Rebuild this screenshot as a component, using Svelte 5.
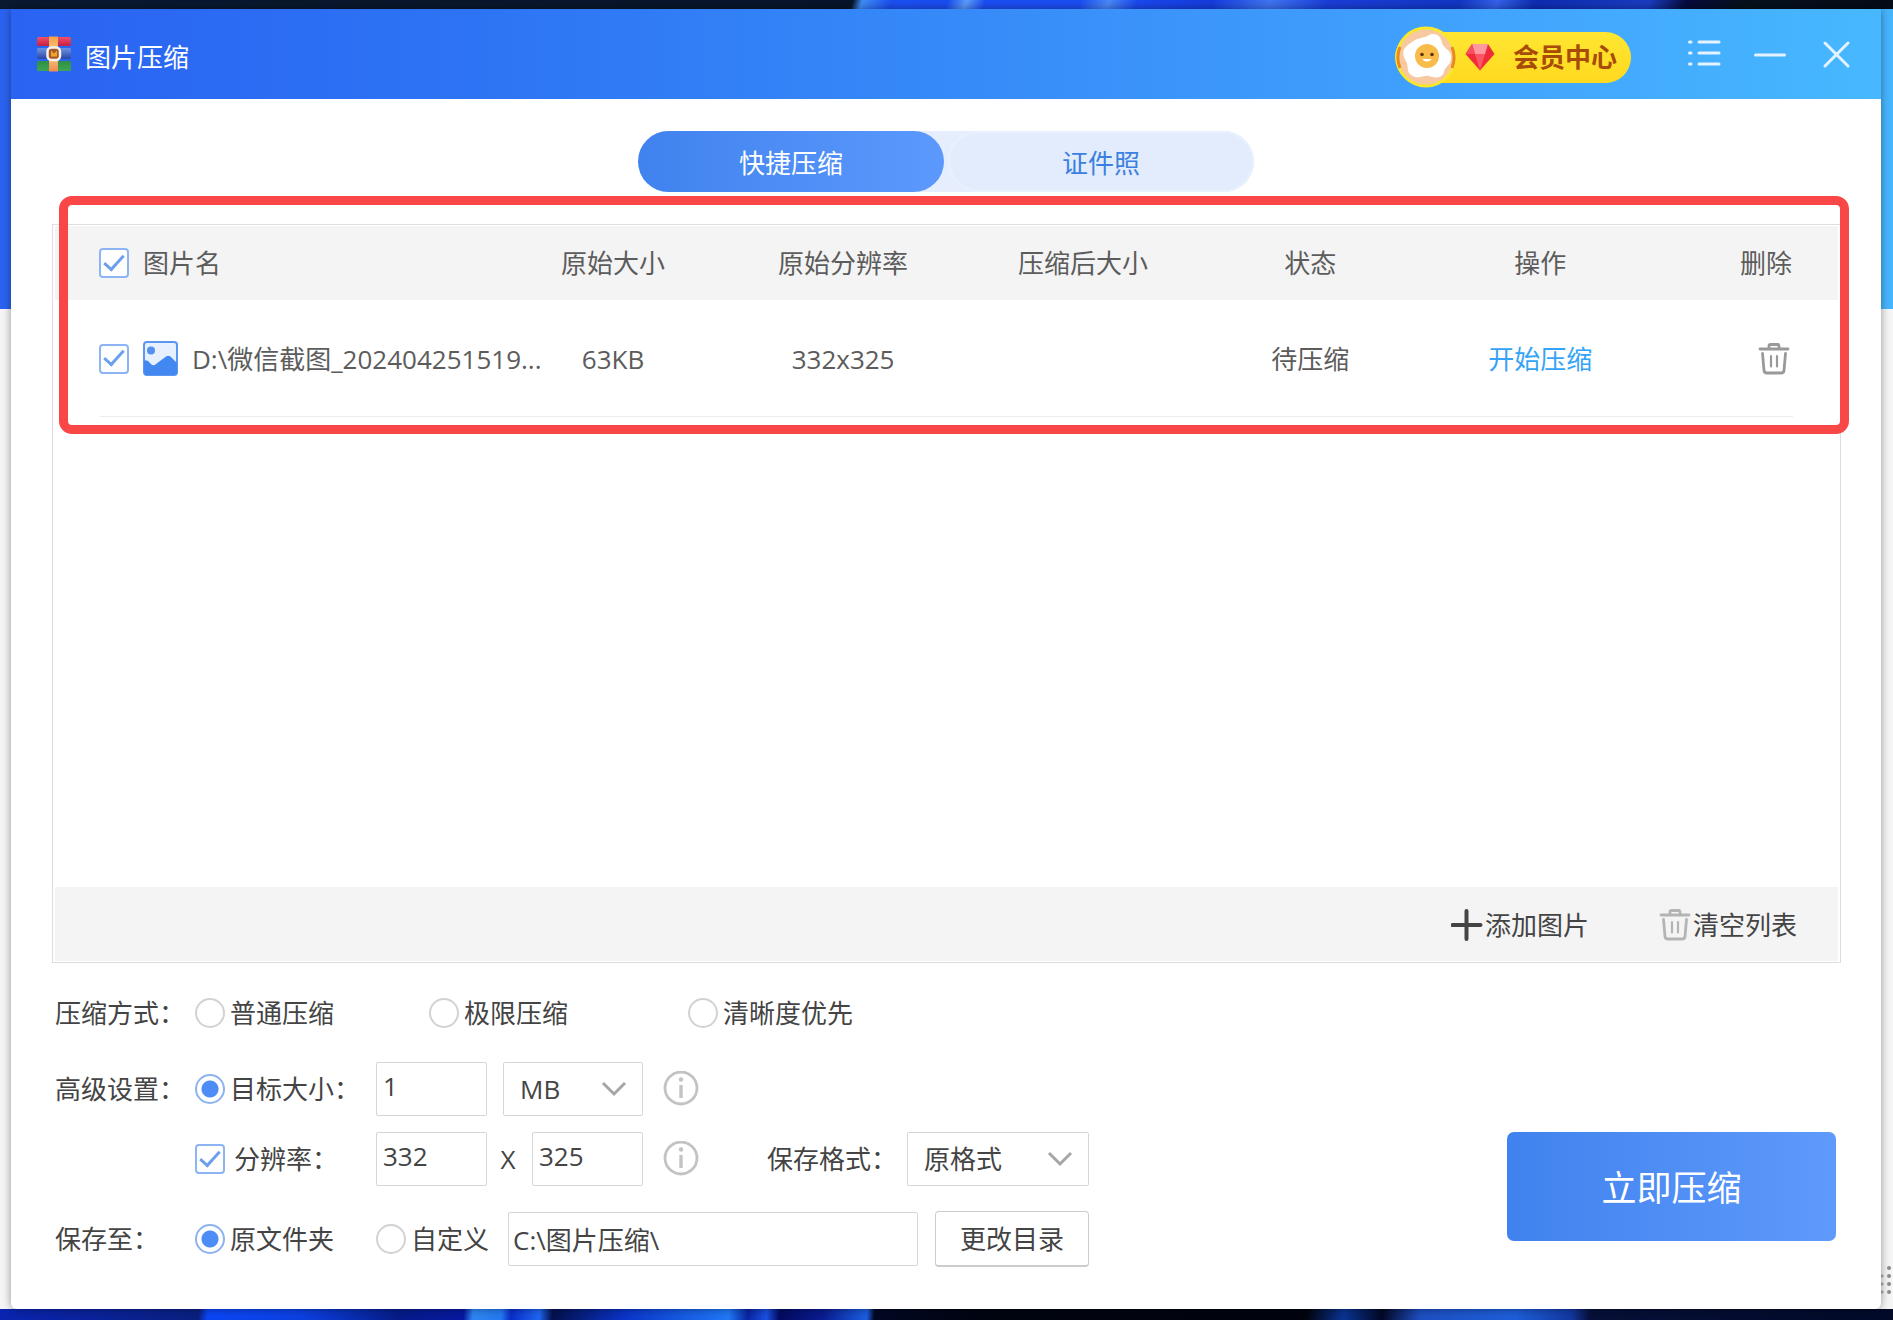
<script>
    let files = $state([
        { name: 'D:\\微信截图_202404251519...', size: '63KB', resolution: '332x325', after: '', status: '待压缩', checked: true }
    ]);
    const columns = ['原始大小', '原始分辨率', '压缩后大小', '状态', '操作', '删除'];
    const modes = ['普通压缩', '极限压缩', '清晰度优先'];

    let tab = $state('quick');
    let mode = $state('');
    let byTarget = $state('target');
    let targetSize = $state('1');
    let unit = $state('MB');
    let keepResolution = $state(true);
    let width = $state('332');
    let height = $state('325');
    let format = $state('原格式');
    let saveTo = $state('source');
    let folder = $state('C:\\图片压缩\\');

    let allChecked = $derived(files.length > 0 && files.every((f) => f.checked));

    function toggleAll(e) {
        const checked = e.target.checked;
        files.forEach((f) => (f.checked = checked));
    }

    function removeFile(index) {
        files.splice(index, 1);
    }
</script>

{#snippet trash(color)}
    <svg class="trash" viewBox="0 0 32 32" width="32" height="32" fill="none" stroke={color} stroke-width="2.8" stroke-linecap="round" stroke-linejoin="round" aria-hidden="true">
        <path d="M2 6H30" />
        <path d="M11 5.500V3Q11 1.500 12.500 1.500H19.500Q21 1.500 21 3V5.500" />
        <path d="M4.500 10.500L6 27.500Q6.300 30 9 30H23Q25.700 30 26 27.500L27.500 10.500" />
        <path d="M13 13V23.500M19 13V23.500" stroke-width="2.2" />
    </svg>
{/snippet}

{#snippet info()}
    <button class="info" aria-label="说明">
        <svg viewBox="0 0 36 36" width="36" height="36" fill="none" stroke="#c3c3c3" aria-hidden="true">
            <circle cx="18" cy="17" r="16" stroke-width="2.800" />
            <path d="M18 14V27" stroke-width="3.400" />
            <circle cx="18" cy="8.500" r="2.200" fill="#c3c3c3" stroke="none" />
        </svg>
    </button>
{/snippet}

<div class="desktop">
    <div class="wallpaper top"></div>
    <div class="behind">
        <div class="window">
            <header>
                <svg class="logo" viewBox="0 0 36 36" width="36" height="36" aria-hidden="true">
                    <defs>
                        <linearGradient id="red" x1="0" y1="0" x2="0" y2="1"><stop offset="0" stop-color="#f0506c" /><stop offset="1" stop-color="#c41f45" /></linearGradient>
                        <linearGradient id="blue" x1="0" y1="0" x2="0" y2="1"><stop offset="0" stop-color="#6d94e0" /><stop offset="1" stop-color="#2746a8" /></linearGradient>
                        <linearGradient id="green" x1="0" y1="0" x2="0" y2="1"><stop offset="0" stop-color="#2f8f45" /><stop offset="1" stop-color="#3fa552" /></linearGradient>
                        <linearGradient id="strap" x1="0" y1="0" x2="0" y2="1"><stop offset="0" stop-color="#f2a04a" /><stop offset="0.500" stop-color="#fbd08a" /><stop offset="1" stop-color="#f08a50" /></linearGradient>
                    </defs>
                    <rect x="1" y="1" width="34" height="9" rx="1.500" fill="url(#red)" />
                    <rect x="1" y="12" width="34" height="11" rx="1.500" fill="url(#blue)" />
                    <rect x="1" y="25" width="34" height="10" rx="1.500" fill="url(#green)" />
                    <rect x="13" y="0.500" width="9" height="35" fill="url(#strap)" />
                    <rect x="11.500" y="11.500" width="12.500" height="12.500" rx="4" fill="#a55a2a" stroke="#f6f1ea" stroke-width="2.500" />
                    <path d="M15 14.500V20.500H21V14.500L18 17.500Z" fill="#f0a52a" />
                </svg>
                <h1>图片压缩</h1>
                <button class="vip">
                    <svg class="egg" viewBox="0 0 62 64" width="62" height="64" aria-hidden="true">
                        <circle cx="31" cy="32" r="29" fill="#f8c9a0" stroke="#fbe62e" stroke-width="3" />
                        <path d="M5 43A28 28 0 0 1 5 22M57 22A28 28 0 0 1 57 43" fill="none" stroke="#e88a1c" stroke-width="3" />
                        <path d="M20 15C26 12 30 13 34 10C42 7 46 12 47 18C48 23 58 26 56 34C55 41 50 41 49 47C47 54 39 53 34 51C28 50 23 55 16 50C11 46 14 41 11 36C8 31 7 26 10 23C13 19 16 18 20 15Z" fill="#fff" />
                        <circle cx="32" cy="31" r="12" fill="#f9bb4a" />
                        <circle cx="27" cy="29.500" r="1.800" fill="#5b3412" />
                        <circle cx="37" cy="29.500" r="1.800" fill="#5b3412" />
                        <path d="M27 34Q32 39.500 37 34Z" fill="#fff" />
                    </svg>
                    <svg viewBox="0 0 30 28" width="30" height="28" aria-hidden="true">
                        <path d="M7 1H23L29.500 11L15 27.500L0.500 11Z" fill="#f02c3c" />
                        <path d="M7 1H23L20 11H10Z" fill="#ff98a0" />
                        <path d="M7 1L10 11H0.500Z" fill="#f8505c" />
                        <path d="M10 11H20L15 27.500Z" fill="#fb5662" />
                    </svg>
                    <span>会员中心</span>
                </button>
                <nav aria-label="窗口">
                    <button aria-label="菜单">
                        <svg viewBox="0 0 34 34" width="34" height="34" stroke="#e4f3ff" stroke-width="3" stroke-linecap="round" aria-hidden="true">
                            <path d="M2.500 6H4M12 6H32M2.500 17H4M12 17H32M2.500 28H4M12 28H32" />
                        </svg>
                    </button>
                    <button aria-label="最小化">
                        <svg viewBox="0 0 34 34" width="34" height="34" stroke="#e4f3ff" stroke-width="3" stroke-linecap="round" aria-hidden="true">
                            <path d="M2.500 19H31.500" />
                        </svg>
                    </button>
                    <button aria-label="关闭">
                        <svg viewBox="0 0 34 34" width="34" height="34" stroke="#e4f3ff" stroke-width="3" stroke-linecap="round" aria-hidden="true">
                            <path d="M6 7L29 30M29 7L6 30" />
                        </svg>
                    </button>
                </nav>
            </header>

            <div class="tabs">
                <button class:active={tab === 'quick'} onclick={() => (tab = 'quick')}>快捷压缩</button>
                <button class:active={tab === 'photo'} onclick={() => (tab = 'photo')}>证件照</button>
            </div>

            <section class="panel">
                <div class="highlight"></div>
                <table>
                    <colgroup>
                        <col class="c-name" /><col class="c-size" /><col class="c-res" /><col class="c-after" /><col class="c-status" /><col class="c-action" /><col class="c-delete" />
                    </colgroup>
                    <thead>
                        <tr>
                            <th>
                                <label class="name">
                                    <input type="checkbox" checked={allChecked} onchange={toggleAll} />
                                    图片名
                                </label>
                            </th>
                            {#each columns as column}
                                <th>{column}</th>
                            {/each}
                        </tr>
                    </thead>
                    <tbody>
                        {#each files as file, index}
                            <tr>
                                <td>
                                    <label class="name">
                                        <input type="checkbox" bind:checked={file.checked} />
                                        <svg viewBox="0 0 35 35" width="35" height="35" aria-hidden="true">
                                            <rect x="1" y="1" width="33" height="33" rx="3" fill="#e6f0ff" stroke="#5b96f0" stroke-width="2" />
                                            <circle cx="8" cy="9.500" r="4" fill="#5590ee" />
                                            <path d="M1 20Q4 18 7 22Q10 26 13 23L23 15.500Q26 13.500 29 17L34 22V31Q34 34 31 34H4Q1 34 1 31Z" fill="#4388f0" />
                                        </svg>
                                        {file.name}
                                    </label>
                                </td>
                                <td>{file.size}</td>
                                <td>{file.resolution}</td>
                                <td>{file.after}</td>
                                <td>{file.status}</td>
                                <td><button class="link">开始压缩</button></td>
                                <td><button class="icon" aria-label="删除" onclick={() => removeFile(index)}>{@render trash('#999')}</button></td>
                            </tr>
                        {/each}
                    </tbody>
                </table>
                <div class="toolbar">
                    <button>
                        <svg viewBox="0 0 32 32" width="32" height="32" stroke="#444" stroke-width="4" stroke-linecap="round" aria-hidden="true">
                            <path d="M15.500 2V30M1.500 16H29.500" />
                        </svg>
                        添加图片
                    </button>
                    <button onclick={() => (files = [])}>{@render trash('#b4b4b4')}清空列表</button>
                </div>
            </section>

            <div class="settings">
                <form onsubmit={(e) => e.preventDefault()}>
                    <div class="row modes">
                        <span class="label">压缩方式：</span>
                        {#each modes as item}
                            <label><input type="radio" name="mode" value={item} bind:group={mode} />{item}</label>
                        {/each}
                    </div>
                    <div class="row">
                        <span class="label">高级设置：</span>
                        <label class="option"><input type="radio" name="target" value="target" bind:group={byTarget} />目标大小：</label>
                        <input class="number" type="text" aria-label="目标大小" bind:value={targetSize} />
                        <select class="unit" aria-label="单位" bind:value={unit}>
                            <option>MB</option>
                            <option>KB</option>
                        </select>
                        {@render info()}
                    </div>
                    <div class="row">
                        <span class="label"></span>
                        <label class="option check"><input type="checkbox" bind:checked={keepResolution} />分辨率：</label>
                        <input class="number" type="text" aria-label="宽度" bind:value={width} />
                        <span class="times">X</span>
                        <input class="number" type="text" aria-label="高度" bind:value={height} />
                        {@render info()}
                        <label class="format-label" for="format">保存格式：</label>
                        <select class="format" id="format" bind:value={format}>
                            <option>原格式</option>
                            <option>JPG</option>
                            <option>PNG</option>
                        </select>
                    </div>
                    <div class="row save">
                        <span class="label">保存至：</span>
                        <label class="option"><input type="radio" name="save" value="source" bind:group={saveTo} />原文件夹</label>
                        <label class="custom"><input type="radio" name="save" value="custom" bind:group={saveTo} />自定义</label>
                        <input class="path" type="text" aria-label="保存目录" bind:value={folder} />
                        <button class="change">更改目录</button>
                    </div>
                </form>
                <button class="start">立即压缩</button>
            </div>
        </div>
        <svg class="grip" viewBox="0 0 12 30" width="12" height="30" fill="#8a8a8a" aria-hidden="true">
            {#each [3, 11, 19, 27] as y, i}
                <circle cx="8" cy={y} r="2" />
                {#if i > 0}<circle cx="1" cy={y} r="1.500" />{/if}
            {/each}
        </svg>
    </div>
    <div class="wallpaper bottom"></div>
</div>

<style>
    :global(body) {
        margin: 0;
    }

    .desktop {
        display: flex;
        flex-direction: column;
        min-height: 100vh;
        font: 26px/36px "Open Sans", "Noto Sans CJK SC", sans-serif;
        color: #444;
    }

    .wallpaper.top {
        height: 9px;
        background: linear-gradient(110deg, #0a1930 0%, #08142a 45%, #3f8df5 45.5%, #1c50f0 47%, #1a4cf0 50%, #5a9bf8 51%, #1b4df2 52%, #1b4df2 57%, #4a88f5 58.5%, #1a48ec 60%, #163cdc 64%, #3f74f0 67%, #1a3ed8 70%, #1236c4 77%, #3461e8 79%, #0d2cb0 81%, #1a3cc0 87%, #060a3c 89%, #06101c 92%, #040c18 100%);
    }

    .wallpaper.bottom {
        height: 11px;
        background: linear-gradient(95deg, #0a24b0 0%, #0a2080 10.5%, #0b46f5 11%, #0b40e0 16%, #071c88 21%, #0618a0 24.5%, #2d86f0 25%, #2478ee 26.5%, #0a2cc8 27%, #1f66f0 28.5%, #04104c 29.2%, #0a34c8 33%, #1f78f5 38.5%, #0a24a0 39.5%, #1a50e0 40.5%, #030b60 41.2%, #0a1c90 43.5%, #1a5ee0 45.8%, #020824 46.2%, #010510 52%, #01040e 69%, #0a3494 71%, #020824 73%, #1d4ec0 75%, #1d5ed8 80%, #1238a0 83%, #061038 84%, #020a28 100%);
    }

    .behind {
        position: relative;
        display: flex;
        flex: 1;
        padding: 0 12px 0 11px;
        background: linear-gradient(90deg, #2a63f0, #2d76f4 30%, #3f9dfb 72%, #47b5fd) top / 100% 300px no-repeat #f5f5f5;
    }

    .window {
        flex: 1;
        min-width: 0;
        background: #fff;
        border-radius: 0 0 6px 6px;
        box-shadow: 0 0 8px rgba(0, 0, 0, 0.4);
    }

    header {
        display: flex;
        align-items: center;
        height: 90px;
        padding: 6px 28px 0 25px;
        box-sizing: border-box;
        background: linear-gradient(90deg, #2a63f2, #2d74f4 25%, #3f9dfc 72%, #47b8ff);
        color: #fff;
    }

    .logo {
        margin: 0 13px 6px 0;
    }

    h1 {
        margin: 0 auto 0 0;
        font-size: 26px;
        font-weight: 400;
    }

    button {
        padding: 0;
        border: 0;
        background: none;
        font: inherit;
        color: inherit;
        cursor: pointer;
    }

    svg {
        display: block;
        flex: none;
    }

    .vip {
        display: flex;
        align-items: center;
        height: 51px;
        margin-right: 56px;
        padding-right: 14px;
        border-radius: 26px;
        background: linear-gradient(#ffe632, #ffd91f);
        color: #a84a08;
        font-weight: 700;
    }

    .egg {
        margin-right: 8px;
    }

    .vip span {
        margin-left: 18px;
    }

    nav {
        display: flex;
        gap: 32px;
        margin-bottom: 8px;
    }

    .tabs {
        display: flex;
        gap: 4px;
        width: 616px;
        height: 61px;
        margin: 32px auto;
        border-radius: 31px;
        background: #e6eefd;
    }

    .tabs button {
        flex: 1;
        padding-top: 3px;
        border-radius: 31px;
        color: #3c7fe0;
        background: #e2ecfd;
        box-shadow: inset 0 0 0 2px #e9f1fe;
    }

    .tabs button.active {
        background: linear-gradient(90deg, #4082ee, #5c99fd);
        box-shadow: none;
        color: #fff;
    }

    .panel {
        position: relative;
        display: flex;
        flex-direction: column;
        min-height: 739px;
        margin: 0 40px 0 41px;
        padding: 1px 2px;
        box-sizing: border-box;
        border: 1px solid #ddd;
    }

    .highlight {
        position: absolute;
        inset: -29px -9px auto 6px;
        height: 220px;
        border: 9px solid #f94747;
        border-radius: 13px;
        pointer-events: none;
    }

    table {
        width: 100%;
        table-layout: fixed;
        border-collapse: collapse;
        color: #5c5c5c;
    }

    .c-name { width: 27.6%; }
    .c-size { width: 7.4%; }
    .c-res { width: 18.4%; }
    .c-after { width: 8.5%; }
    .c-status { width: 17%; }
    .c-action { width: 8.8%; }
    .c-delete { width: 12.3%; }

    th,
    td {
        padding: 0;
        font-weight: 400;
        text-align: center;
        white-space: nowrap;
    }

    th {
        height: 74px;
        background: #f4f4f4;
    }

    td {
        height: 117px;
    }

    tbody tr {
        background: linear-gradient(#ececec, #ececec) bottom / calc(100% - 90px) 1px no-repeat;
    }

    th:last-child,
    td:last-child {
        padding-right: 46px;
        text-align: right;
    }

    .name {
        display: flex;
        align-items: center;
        gap: 14px;
        padding-left: 44px;
    }

    .link {
        color: #35a3f7;
    }

    .icon {
        display: block;
        margin: 0 2px 0 auto;
    }

    .toolbar {
        display: flex;
        justify-content: flex-end;
        gap: 70px;
        margin-top: auto;
        padding: 20px 41px 18px;
        background: #f4f4f4;
    }

    .toolbar button {
        display: flex;
        align-items: center;
        gap: 2px;
    }

    .settings {
        display: flex;
        justify-content: space-between;
        align-items: flex-end;
        padding: 23px 45px 38px 44px;
    }

    form {
        display: flex;
        flex-direction: column;
        gap: 16px;
    }

    .row {
        display: flex;
        align-items: center;
        height: 54px;
    }

    .modes {
        display: grid;
        grid-template-columns: 140px 234px 259px auto;
        margin-bottom: 6px;
    }

    .save {
        height: 56px;
        margin-top: 9px;
    }

    .label {
        width: 140px;
    }

    .row label {
        display: flex;
        align-items: center;
        gap: 5px;
    }

    .row .option {
        width: 181px;
    }

    .row .check {
        gap: 9px;
    }

    .row .custom {
        margin-right: 19px;
    }

    .row .format-label {
        margin: 0 10px 0 68px;
    }

    input[type='checkbox'],
    input[type='radio'] {
        appearance: none;
        flex: none;
        width: 30px;
        height: 30px;
        margin: 0;
        box-sizing: border-box;
        border: 2px solid #d2d2d2;
        border-radius: 50%;
        background: #fff;
    }

    input[type='checkbox'] {
        display: grid;
        place-items: center;
        border-color: #8db5f5;
        border-radius: 4px;
    }

    input[type='checkbox']:checked::after {
        content: '';
        width: 17px;
        height: 8px;
        margin-bottom: 6px;
        border-left: 3px solid #6c9fec;
        border-bottom: 3px solid #6c9fec;
        transform: rotate(-48deg);
    }

    input[type='radio']:checked {
        border-color: #8db2f0;
        background: radial-gradient(circle, #4d8df5 8px, #fff 9px);
    }

    input[type='text'],
    select {
        height: 54px;
        box-sizing: border-box;
        border: 1px solid #d6d6d6;
        border-radius: 2px;
        background: #fff;
        font: inherit;
        color: inherit;
    }

    .number {
        width: 111px;
        padding: 0 6px 6px;
    }

    select {
        appearance: none;
        padding: 0 16px;
    }

    .unit {
        width: 140px;
        margin-left: 16px;
    }

    .format {
        width: 182px;
    }

    .unit,
    .format {
        background: url("data:image/svg+xml,%3Csvg xmlns='http://www.w3.org/2000/svg' width='26' height='16' fill='none' stroke='%23a6a6a6' stroke-width='3'%3E%3Cpath d='M2 2L13 13L24 2'/%3E%3C/svg%3E") right 15px center no-repeat #fff;
    }

    .times {
        width: 45px;
        padding-right: 3px;
        box-sizing: border-box;
        text-align: center;
    }

    .info {
        margin-left: 20px;
    }

    .path {
        width: 410px;
        padding: 0 4px;
    }

    .change {
        height: 56px;
        margin-left: 17px;
        padding: 0 24px;
        border: 1px solid #ccc;
        border-bottom-width: 2px;
        border-radius: 4px;
    }

    .start {
        width: 329px;
        height: 109px;
        margin-bottom: 26px;
        padding-top: 3px;
        border-radius: 7px;
        background: linear-gradient(90deg, #4082ee, #5f9afb);
        color: #fff;
        font-size: 35px;
    }

    .grip {
        position: absolute;
        right: 0;
        bottom: 14px;
    }
</style>
